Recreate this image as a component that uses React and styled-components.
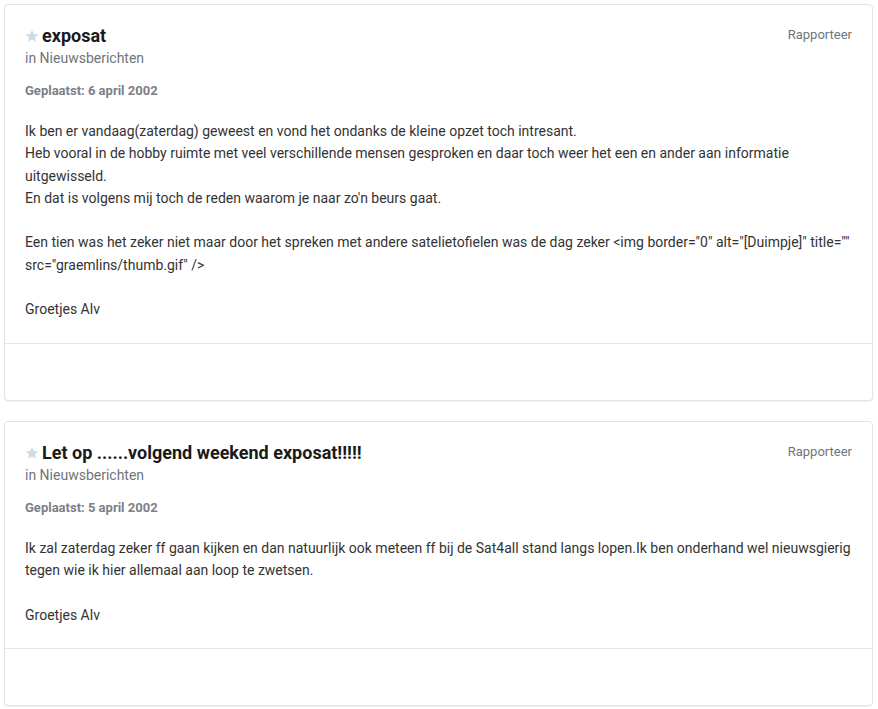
import React from "react";
import styled, { createGlobalStyle } from "styled-components";

const Global = createGlobalStyle`
  html, body { margin: 0; padding: 0; background: #fff; }
  body { font-family: Roboto, "Liberation Sans", Arial, sans-serif; }
`;

const Page = styled.div`
  display: flex;
  flex-direction: column;
  gap: 20px;
  padding: 4px 5px 2px 4px;
`;

const Card = styled.article`
  background: #fff;
  border: 1px solid #e3e3e3;
  border-radius: 4px;
  box-shadow: 0 1px 1px rgba(0, 0, 0, 0.06);
`;

const Head = styled.header`
  display: flex;
  justify-content: space-between;
  align-items: flex-start;
  padding: 19px 20px 0 20px;
`;

const TitleBlock = styled.div`
  display: flex;
  flex-direction: column;
`;

const TitleRow = styled.h2`
  margin: 0;
  display: flex;
  align-items: center;
  gap: 3px;
  font-size: 18px;
  line-height: 24px;
  font-weight: 700;
  color: #1a1a1a;
`;

const Category = styled.div`
  font-size: 14px;
  line-height: 20px;
  color: #6f757b;
`;

const Report = styled.a`
  font-size: 13px;
  line-height: 18px;
  margin-top: 2px;
  color: #6f757b;
  text-decoration: none;
  cursor: pointer;
`;

const Posted = styled.div`
  padding: 14px 20px 0 20px;
  font-size: 13px;
  line-height: 18px;
  font-weight: 700;
  color: #7b8087;
`;

const Body = styled.div`
  padding: 20px 20px 22px 20px;
  font-size: 14px;
  line-height: 22.3px;
  color: #333;
  white-space: pre-line;
`;

const Foot = styled.footer`
  height: 56px;
  border-top: 1px solid #e6e6e6;
`;

const Star = () => (
  <svg width="14" height="14" viewBox="0 0 24 24" aria-hidden="true">
    <path
      fill="#cddbe7"
      d="M12 1.5l3.1 7.1 7.7.7-5.8 5.1 1.7 7.6L12 18l-6.7 4 1.7-7.6L1.2 9.3l7.7-.7z"
    />
  </svg>
);

const posts = [
  {
    title: "exposat",
    date: "6 april 2002",
    text:
      "Ik ben er vandaag(zaterdag) geweest en vond het ondanks de kleine opzet toch intresant.\nHeb vooral in de hobby ruimte met veel verschillende mensen gesproken en daar toch weer het een en ander aan informatie uitgewisseld.\nEn dat is volgens mij toch de reden waarom je naar zo'n beurs gaat.\n\nEen tien was het zeker niet maar door het spreken met andere satelietofielen was de dag zeker <img border=\"0\" alt=\"[Duimpje]\" title=\"\" src=\"graemlins/thumb.gif\" />\n\nGroetjes Alv",
  },
  {
    title: "Let op ......volgend weekend exposat!!!!!",
    date: "5 april 2002",
    text:
      "Ik zal zaterdag zeker ff gaan kijken en dan natuurlijk ook meteen ff bij de Sat4all stand langs lopen.Ik ben onderhand wel nieuwsgierig tegen wie ik hier allemaal aan loop te zwetsen.\n\nGroetjes Alv",
  },
];

export default function App() {
  return (
    <>
      <Global />
      <Page>
        {posts.map((p) => (
          <Card key={p.title}>
            <Head>
              <TitleBlock>
                <TitleRow>
                  <Star />
                  {p.title}
                </TitleRow>
                <Category>in Nieuwsberichten</Category>
              </TitleBlock>
              <Report>Rapporteer</Report>
            </Head>
            <Posted>Geplaatst: {p.date}</Posted>
            <Body>{p.text}</Body>
            <Foot />
          </Card>
        ))}
      </Page>
    </>
  );
}
